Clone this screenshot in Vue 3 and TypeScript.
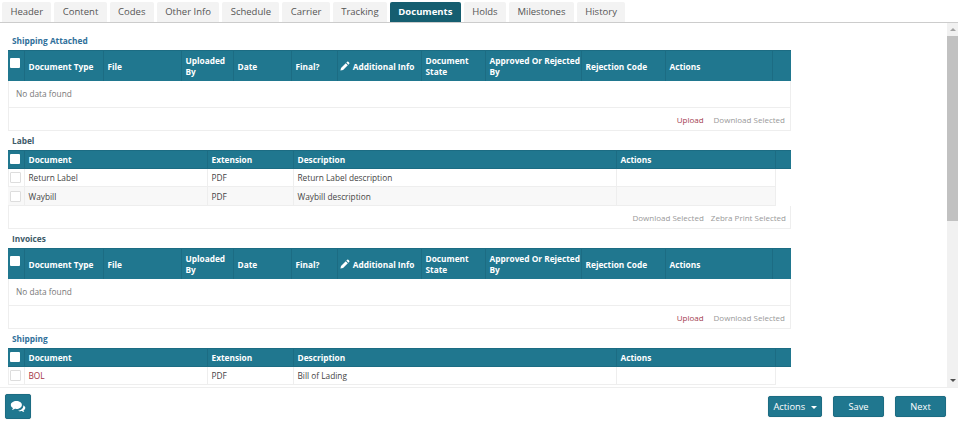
<script setup lang="ts">
const tabs: string[] = ['Header','Content','Codes','Other Info','Schedule','Carrier','Tracking','Documents','Holds','Milestones','History']
const wideCols: number[] = [16,79,78,52,58,46,84,64,96,84,107,19]
const narrowCols: number[] = [16,183,86,323,159,16]
const wideHead: string[] = ['Document Type','File','Uploaded By','Date','Final?','Additional Info','Document State','Approved Or Rejected By','Rejection Code','Actions','']
const narrowHead: string[] = ['Document','Extension','Description','Actions','']
interface Row { name: string; desc: string; link?: boolean }
const labelRows: Row[] = [
  { name: 'Return Label', desc: 'Return Label description' },
  { name: 'Waybill', desc: 'Waybill description' }
]
const shipRows: Row[] = [{ name: 'BOL', desc: 'Bill of Lading', link: true }]
const sections = [
  { title: 'Shipping Attached', blue: true, kind: 'wide', rows: [] as Row[] },
  { title: 'Label', blue: false, kind: 'narrow', rows: labelRows },
  { title: 'Invoices', blue: false, kind: 'wide', rows: [] as Row[] },
  { title: 'Shipping', blue: true, kind: 'narrow', rows: shipRows, open: true }
]
</script>

<template>
  <div class="page">
    <nav class="tabs">
      <a v-for="t in tabs" :key="t" class="tab" :class="{ active: t === 'Documents' }">{{ t }}</a>
    </nav>
    <div class="middle">
      <main class="content">
        <section v-for="s in sections" :key="s.title" class="section">
          <h3 class="title" :class="{ blue: s.blue }">{{ s.title }}</h3>
          <div class="panel" :class="{ open: s.open }">
            <table v-if="s.kind === 'wide'" class="grid">
              <colgroup><col v-for="(w, i) in wideCols" :key="i" :style="{ width: w + 'px' }" /></colgroup>
              <thead>
                <tr class="tall">
                  <th class="chk"><span class="box head"></span></th>
                  <th v-for="(h, i) in wideHead" :key="i">
                    <svg v-if="h === 'Additional Info'" class="pencil" viewBox="0 0 12 12"><path d="M8.6.9a1 1 0 0 1 1.4 0l1.1 1.1a1 1 0 0 1 0 1.4l-1 1-2.500-2.500zM6.900 2.600l2.500 2.500-5.700 5.700L.5 11.500l.7-3.200z" fill="#fff"/></svg>
                    {{ h }}
                  </th>
                </tr>
              </thead>
            </table>
            <div v-if="s.kind === 'wide'" class="empty">No data found</div>

            <table v-else class="grid">
              <colgroup><col v-for="(w, i) in narrowCols" :key="i" :style="{ width: w + 'px' }" /></colgroup>
              <thead>
                <tr class="short">
                  <th class="chk"><span class="box head up"></span></th>
                  <th v-for="(h, i) in narrowHead" :key="i">{{ h }}</th>
                </tr>
              </thead>
              <tbody>
                <tr v-for="(r, i) in s.rows" :key="r.name" :class="{ alt: i % 2 === 1 }">
                  <td class="chk"><span class="box"></span></td>
                  <td :class="{ link: r.link }">{{ r.name }}</td>
                  <td>PDF</td>
                  <td>{{ r.desc }}</td>
                  <td></td>
                  <td class="void"></td>
                </tr>
              </tbody>
            </table>

            <div v-if="!s.open" class="panel-foot" :class="{ tight: s.kind === 'narrow' }">
              <template v-if="s.kind === 'wide'">
                <a class="upload">Upload</a><a>Download Selected</a>
              </template>
              <template v-else>
                <a>Download Selected</a><a>Zebra Print Selected</a>
              </template>
            </div>
          </div>
        </section>
      </main>
      <aside class="scrollbar">
        <span class="arrow up-arrow"></span>
        <span class="thumb"></span>
        <span class="arrow down-arrow"></span>
      </aside>
    </div>
    <footer class="foot">
      <button class="btn chat" aria-label="Chat">
        <svg viewBox="0 0 20 16" width="17" height="14">
          <path d="M7.500 1C3.900 1 1 3 1 5.600c0 1.500 1 2.800 2.500 3.700-.2.800-.7 1.500-1.300 2.100 1.300-.1 2.600-.6 3.600-1.300.5.1 1.100.2 1.700.2 3.600 0 6.500-2 6.500-4.700S11.100 1 7.500 1z" fill="#fff"/>
          <path d="M15.500 6.200c.1.300.1.500.1.800 0 2.700-2.900 5-6 5.300.8.500 1.700.7 2.800.7.500 0 1-.1 1.500-.2.900.6 1.900 1 3 1.100-.5-.5-.9-1.100-1.100-1.800 1.300-.8 2.200-2 2.200-3.300 0-1.100-1-2.200-2.500-2.600z" fill="#fff"/>
        </svg>
      </button>
      <div class="foot-right">
        <button class="btn actions">Actions <i class="caret"></i></button>
        <button class="btn save">Save</button>
        <button class="btn next">Next</button>
      </div>
    </footer>
  </div>
</template>

<style>
html, body { margin: 0; background: #fff; overflow: hidden; }
</style>

<style scoped>
.page {
  width: 958px; height: 424px; display: flex; flex-direction: column;
  font-family: "Open Sans", "Liberation Sans", sans-serif; font-size: 8.3px; color: #444; overflow: hidden;
}
.tabs {
  height: 23px; box-sizing: border-box; padding: 2px 0 0 2px; display: flex; gap: 3px;
  border-bottom: 1px solid #ccc; flex: none;
}
.tab {
  padding: 0 8.4px; height: 20px; line-height: 20px; background: #f3f3f3; color: #555;
  font-size: 9.5px; border-radius: 2px 2px 0 0;
}
.tab.active { background: #155e70; color: #fff; font-weight: 700; }
.middle { flex: none; height: 364px; display: flex; }
.content { flex: 1; overflow: hidden; padding: 12px 0 0 8px; }
.section { width: 783px; margin-bottom: 4px; }
.title { margin: 0; height: 15px; padding-left: 4px; line-height: 12px; font-size: 8.3px; font-weight: 700; color: #3d5a68; }
.title.blue { color: #2f6f9a; }
.panel { border: 1px solid #eee; border-top: 0; }
.panel.open { border-bottom: 0; }
.grid { width: 783px; table-layout: fixed; border-collapse: collapse; margin-left: -1px; }
.grid th {
  background: #20778f; color: #fff; font-weight: 700; text-align: left; padding: 0 0 0 4px;
  line-height: 11px; font-size: 8.3px; border-left: 1px solid #1c6c83; border-top: 1px solid #1c6c83;
}
.grid th:first-child { border-left: 0; }
.tall th { height: 30px; }
.short th { height: 17px; border-bottom: 1px solid #1c6c83; }
.pencil { width: 10px; height: 10px; vertical-align: -1.5px; margin: 0 1px 0 -2px; }
.chk { padding: 0 !important; position: relative; }
.box { display: block; width: 9px; height: 9px; margin: 0 auto 0 2px; background: #fff; border: 1px solid #ddd; border-radius: 1px; }
.box.head { width: 10px; height: 10px; border: 0; margin-top: -7px; }
.box.head.up { margin-top: -2px; }
.grid td { height: 17px; padding: 0 4px; border: 1px solid #eee; line-height: 11px; color: #444; }
.grid .alt td { height: 18px; }
.grid td.chk { padding: 0; border-left: 0; }
.grid td.void { border: 0; background: #fff; }
.grid .alt td:not(.void) { background: #f8f8f8; }
.grid td.link { color: #a3313f; }
.empty { height: 26px; line-height: 26px; padding-left: 7px; color: #777; border-bottom: 1px solid #eee; }
.panel-foot {
  height: 22px; display: flex; justify-content: flex-end; align-items: center; gap: 10px;
  padding-right: 5px; color: #999; font-size: 8px;
}
.panel-foot.tight { gap: 7px; padding-right: 4px; }
.upload { color: #a3404f; }
.scrollbar { width: 11px; background: #f1f1f1; display: flex; flex-direction: column; align-items: stretch; flex: none; }
.arrow { height: 13px; display: flex; align-items: center; justify-content: center; flex: none; }
.arrow::before { content: ""; border-left: 3px solid transparent; border-right: 3px solid transparent; }
.up-arrow::before { border-bottom: 3px solid #a3a3a3; }
.down-arrow { margin-top: auto; }
.down-arrow::before { border-top: 3px solid #505050; }
.thumb { height: 185px; background: #c1c1c1; flex: none; }
.foot {
  flex: 1; display: flex; justify-content: space-between; align-items: flex-start;
  border-top: 1px solid #eee; padding: 6px 12px 0 5px; box-sizing: border-box;
}
.foot-right { display: flex; gap: 11px; padding-top: 2px; }
.btn {
  background: #20778f; color: #fff; border: 1px solid #1c6c83; border-radius: 2px;
  font-family: inherit; font-size: 9.3px; padding: 0; height: 21px; box-shadow: 0 0 1px rgba(0,0,0,.25);
}
.chat { width: 26px; height: 25px; display: flex; align-items: center; justify-content: center; }
.actions { width: 54px; }
.save { width: 51px; }
.next { width: 51px; }
.caret {
  display: inline-block; border-left: 3px solid transparent; border-right: 3px solid transparent;
  border-top: 3px solid #fff; margin-left: 3px; vertical-align: 1px;
}
</style>
